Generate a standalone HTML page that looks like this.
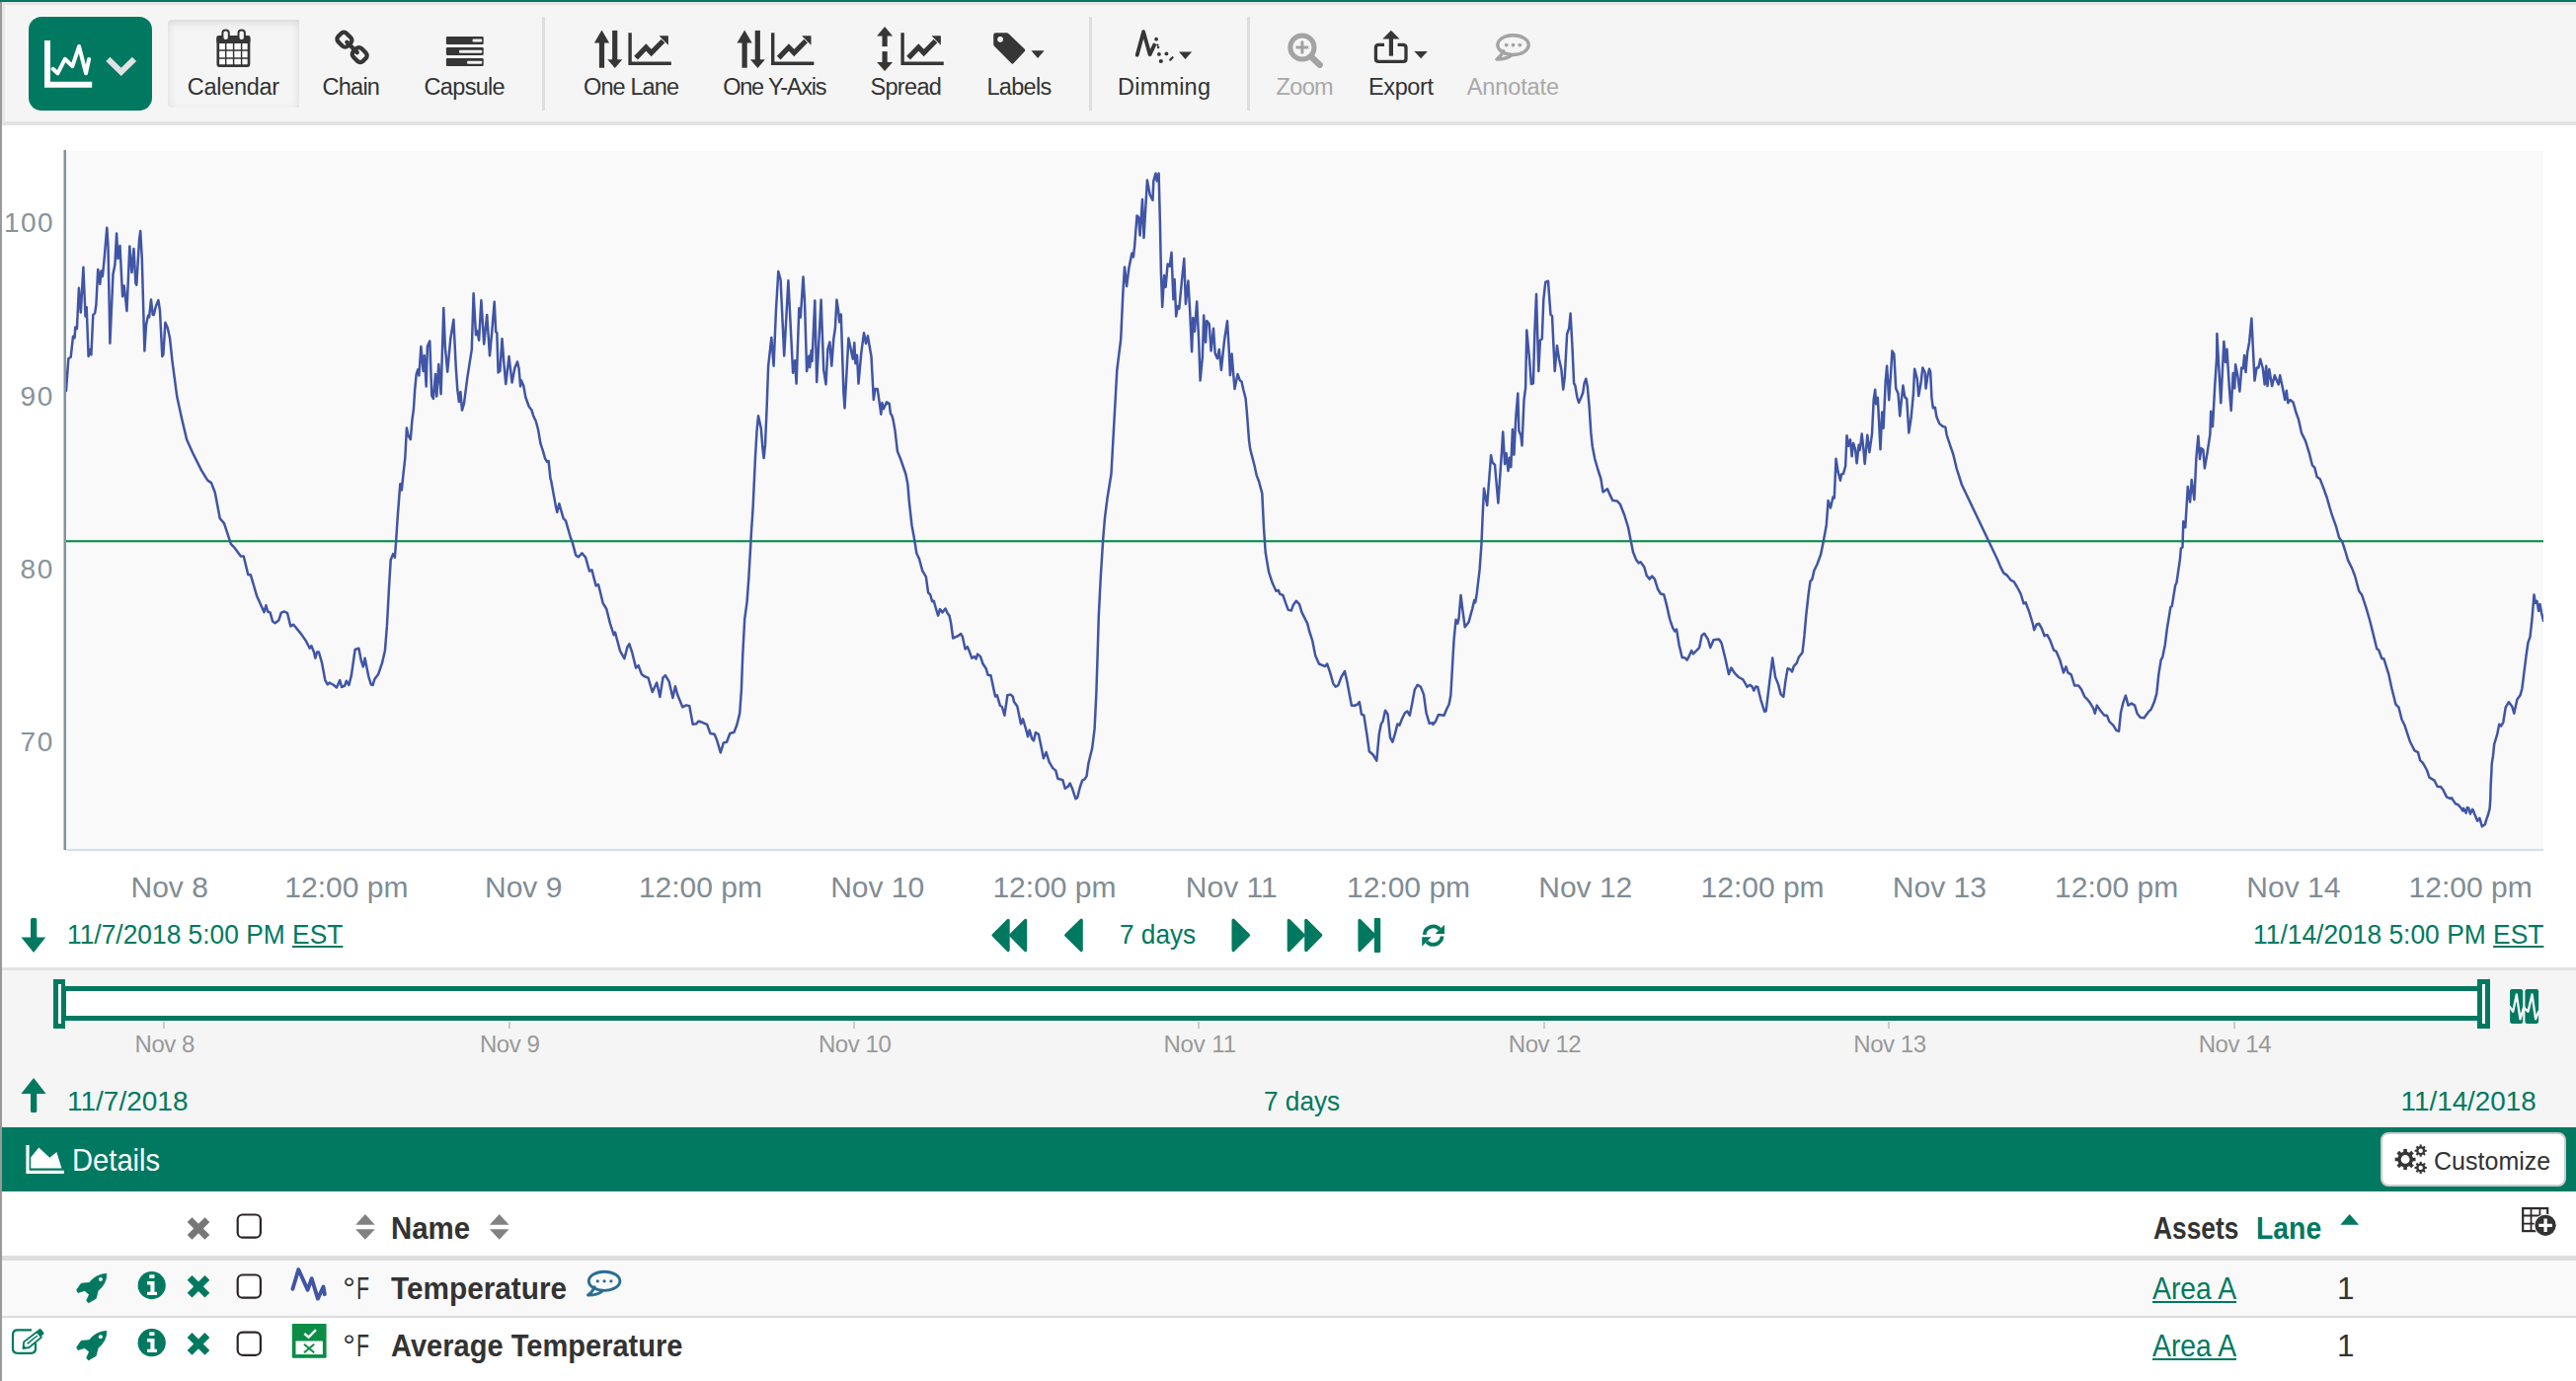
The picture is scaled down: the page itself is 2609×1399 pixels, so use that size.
<!DOCTYPE html>
<html><head><meta charset="utf-8"><title>Seeq Trend</title>
<style>
html,body{margin:0;padding:0}
body{width:2609px;height:1399px;position:relative;overflow:hidden;background:#fff;font-family:"Liberation Sans",sans-serif}
.b{position:absolute;display:block}
.t{position:absolute;white-space:nowrap;line-height:1;display:block}
u{text-decoration-thickness:2px;text-underline-offset:2px}
</style></head><body>
<div class="b" style="left:0px;top:0px;width:2609px;height:2px;background:#007960"></div>
<div class="b" style="left:0px;top:2px;width:2px;height:1397px;background:#999"></div>
<div class="b" style="left:2px;top:2px;width:2607px;height:125px;background:#f5f5f5;box-sizing:border-box;border-top:3px solid #e6e4e4;border-left:3px solid #e8e8e8;border-bottom:4px solid #e2e2e2"></div>
<div class="b" style="left:29px;top:17px;width:125px;height:95px;background:#007960;border-radius:13px"></div>
<div class="b" style="left:170px;top:20px;width:133px;height:89px;background:#f5f5f5;border-radius:4px 0 0 4px;box-shadow:inset 0 3px 8px rgba(0,0,0,0.12)"></div>
<div class="b" style="left:549.3px;top:17px;width:2.6px;height:95px;background:#dfdfdf"></div>
<div class="b" style="left:1103.2px;top:17px;width:2.6px;height:95px;background:#dfdfdf"></div>
<div class="b" style="left:1263.1px;top:17px;width:2.6px;height:95px;background:#dfdfdf"></div>
<span class="t" style="left:189.80px;top:77.21px;font-size:23.5px;color:#333;letter-spacing:-0.293px;">Calendar</span>
<span class="t" style="left:326.60px;top:77.21px;font-size:23.5px;color:#333;letter-spacing:-0.775px;">Chain</span>
<span class="t" style="left:429.60px;top:77.21px;font-size:23.5px;color:#333;letter-spacing:-0.692px;">Capsule</span>
<span class="t" style="left:591.00px;top:77.21px;font-size:23.5px;color:#333;letter-spacing:-0.893px;">One Lane</span>
<span class="t" style="left:732.20px;top:77.21px;font-size:23.5px;color:#333;letter-spacing:-1.206px;">One Y-Axis</span>
<span class="t" style="left:881.50px;top:77.21px;font-size:23.5px;color:#333;letter-spacing:-0.690px;">Spread</span>
<span class="t" style="left:999.40px;top:77.21px;font-size:23.5px;color:#333;letter-spacing:-0.670px;">Labels</span>
<span class="t" style="left:1132.10px;top:77.21px;font-size:23.5px;color:#333;letter-spacing:0.192px;">Dimming</span>
<span class="t" style="left:1292.60px;top:77.21px;font-size:23.5px;color:#a9a9a9;letter-spacing:-0.667px;">Zoom</span>
<span class="t" style="left:1386.10px;top:77.21px;font-size:23.5px;color:#333;letter-spacing:-0.420px;">Export</span>
<span class="t" style="left:1485.70px;top:77.21px;font-size:23.5px;color:#a9a9a9;letter-spacing:-0.100px;">Annotate</span>
<div class="b" style="left:67px;top:153px;width:2509px;height:708px;background:#f9f9f9"></div>
<svg class="b" style="left:0px;top:0px;" width="2609" height="1399" viewBox="0 0 2609 1399"><rect x="64.5" y="152" width="2.5" height="709" fill="#82929b"/>
<rect x="67" y="860.2" width="2509" height="1.6" fill="#ccd6eb"/>
<rect x="67" y="547.2" width="2509" height="2.1" fill="#068c45"/>
<clipPath id="pc"><rect x="67" y="153" width="2509" height="708"/></clipPath>
<path d="M67.0 395.9 L69.3 363.3 L71.7 361.8 L74.0 340.7 L75.6 342.3 L76.3 331.4 L77.9 333.0 L79.9 291.7 L81.8 316.6 L84.4 270.7 L86.5 320.5 L87.7 311.2 L89.6 361.0 L91.1 354.0 L92.4 359.4 L94.3 318.9 L96.1 317.4 L97.4 308.8 L99.2 273.0 L101.3 287.8 L102.4 274.6 L103.9 280.0 L105.5 263.7 L108.3 230.7 L109.5 249.6 L111.4 347.7 L114.5 277.7 L116.4 268.3 L118.1 236.4 L119.5 262.1 L121.5 248.9 L124.1 300.3 L125.7 289.4 L128.5 315.0 L131.3 249.6 L133.5 276.1 L135.5 252.0 L137.4 287.0 L138.3 288.6 L141.0 243.4 L142.2 234.1 L143.8 262.1 L146.4 355.5 L148.0 329.1 L150.0 319.7 L151.1 321.3 L153.0 303.4 L154.7 318.9 L155.8 318.9 L157.8 310.4 L160.4 304.1 L162.0 315.0 L164.3 361.0 L165.4 359.4 L167.4 326.7 L169.8 332.2 L172.1 343.1 L174.4 365.0 L179.3 402.1 L184.2 424.5 L189.2 445.6 L195.4 459.3 L204.1 476.6 L210.3 486.6 L214.0 489.1 L217.8 499.0 L222.7 525.1 L227.0 530.1 L233.9 551.2 L237.6 554.9 L243.9 563.6 L246.8 563.6 L251.3 582.2 L253.8 582.2 L260.0 603.4 L267.5 620.2 L269.4 613.3 L271.2 619.5 L273.7 620.7 L276.1 629.4 L278.6 631.2 L282.4 628.2 L284.8 620.7 L288.1 619.5 L291.1 621.2 L294.3 634.4 L297.3 632.7 L304.7 641.9 L309.9 649.3 L313.7 656.8 L315.4 654.3 L317.9 660.5 L319.4 666.7 L321.1 660.5 L322.9 660.5 L326.1 671.7 L329.3 689.1 L331.8 693.5 L333.5 691.6 L337.3 693.5 L341.0 696.5 L344.2 689.1 L346.0 696.0 L349.2 694.5 L350.9 689.8 L353.4 694.0 L355.9 684.1 L359.6 658.0 L363.4 656.8 L365.8 669.2 L367.8 675.4 L369.6 666.7 L373.3 685.3 L375.8 693.5 L377.5 694.0 L379.5 687.8 L383.2 682.9 L387.0 671.7 L389.9 659.3 L391.9 634.4 L393.9 597.1 L395.7 567.3 L398.1 561.1 L399.9 564.8 L401.1 548.7 L402.9 521.4 L405.3 490.3 L406.8 496.5 L408.6 479.1 L410.3 464.2 L411.9 433.5 L413.5 441.3 L415.8 445.2 L417.4 425.7 L418.9 414.8 L420.2 394.6 L421.7 379.0 L423.3 374.3 L424.4 380.5 L426.4 351.0 L428.6 375.9 L429.8 360.3 L431.7 391.4 L432.9 351.0 L435.3 345.5 L437.3 400.8 L438.9 403.9 L441.0 379.0 L442.3 401.6 L444.3 368.9 L446.6 399.2 L449.3 312.0 L450.8 351.0 L453.2 376.7 L456.3 343.2 L459.4 323.7 L461.7 371.2 L463.3 394.6 L464.9 407.0 L466.4 396.9 L468.0 415.6 L470.0 408.6 L473.4 382.1 L477.8 354.1 L479.6 297.2 L482.0 339.3 L483.5 335.4 L485.1 344.7 L487.4 304.3 L490.2 348.6 L493.2 319.0 L496.0 360.3 L498.3 335.4 L500.7 305.8 L502.2 336.2 L503.3 337.0 L504.6 377.4 L506.4 375.9 L508.5 343.2 L510.5 369.6 L512.3 389.1 L515.5 361.1 L518.6 387.6 L521.4 372.8 L524.0 366.5 L525.6 373.5 L527.1 391.4 L527.9 385.2 L530.3 390.7 L532.3 402.3 L535.7 411.7 L538.5 415.6 L540.4 421.8 L542.7 426.5 L545.0 435.0 L547.4 449.1 L549.7 456.1 L552.1 464.6 L554.1 467.7 L555.6 467.0 L557.5 485.0 L558.1 486.6 L563.1 513.9 L564.3 518.9 L566.3 510.2 L570.6 525.1 L573.0 527.6 L578.0 545.0 L579.5 548.7 L583.2 562.4 L585.7 564.3 L589.4 560.4 L593.2 564.8 L596.9 578.5 L599.4 577.3 L603.6 593.4 L606.1 592.2 L610.6 610.8 L614.3 617.0 L618.0 631.9 L621.7 643.1 L623.0 640.6 L628.0 659.3 L632.4 667.2 L635.4 655.5 L637.4 652.3 L640.4 661.7 L644.1 676.6 L646.6 674.2 L649.8 682.9 L652.8 685.3 L656.5 686.6 L660.7 701.0 L665.2 691.6 L668.4 706.0 L671.4 686.6 L673.9 684.1 L677.6 690.3 L681.4 707.0 L683.9 695.3 L686.3 704.0 L691.3 716.4 L695.0 714.4 L698.3 715.2 L701.7 733.8 L705.0 733.3 L707.5 730.6 L711.2 731.8 L716.1 733.8 L719.4 743.0 L723.6 743.7 L726.1 749.9 L729.8 762.4 L732.8 752.4 L736.0 751.7 L739.3 743.0 L743.5 741.7 L746.5 733.8 L749.2 722.6 L750.9 699.0 L752.2 664.2 L754.2 627.0 L756.6 609.6 L758.4 584.7 L760.1 554.9 L760.9 540.0 L762.6 514.7 L764.9 465.0 L766.5 436.8 L768.0 421.3 L770.8 433.7 L772.4 454.0 L773.6 464.1 L775.0 450.9 L776.6 413.5 L778.1 371.4 L781.3 341.9 L783.6 370.7 L785.9 315.4 L788.3 274.9 L790.6 283.5 L794.2 360.5 L798.4 284.3 L803.1 377.7 L805.1 365.2 L806.6 388.6 L809.3 312.3 L810.8 321.6 L813.5 280.4 L815.0 305.3 L817.1 376.1 L819.4 360.5 L820.2 372.2 L821.7 355.1 L822.5 366.0 L825.3 304.5 L827.2 387.0 L831.6 303.7 L834.2 374.6 L836.5 389.4 L838.4 353.5 L840.4 346.5 L842.3 370.7 L844.3 343.4 L845.9 332.5 L847.4 303.7 L849.0 313.8 L850.2 326.3 L851.8 318.5 L854.4 397.9 L855.5 413.5 L859.4 342.6 L863.8 363.7 L865.3 347.3 L866.4 368.3 L868.0 359.8 L869.5 388.6 L872.3 357.4 L875.0 337.2 L877.0 348.1 L878.9 340.3 L880.9 352.0 L882.5 361.3 L884.8 404.9 L886.4 394.0 L888.7 394.0 L890.3 404.9 L892.3 419.7 L893.4 408.0 L894.9 414.3 L898.0 407.3 L900.7 408.8 L901.9 418.9 L903.5 421.3 L904.7 425.9 L906.6 436.8 L908.9 457.1 L912.1 465.0 L917.3 480.0 L919.3 489.9 L921.0 509.8 L923.5 532.2 L926.0 545.8 L928.4 560.7 L930.9 565.7 L934.2 578.1 L937.9 584.3 L940.1 600.5 L942.1 602.2 L944.1 609.2 L945.8 608.7 L947.6 615.4 L950.1 623.6 L952.0 617.1 L954.5 620.4 L957.5 616.6 L959.5 621.1 L961.5 623.6 L963.2 631.6 L965.2 646.5 L968.2 645.2 L970.7 644.0 L973.2 642.0 L974.9 645.2 L977.6 657.6 L979.9 655.2 L981.9 660.1 L984.3 666.8 L986.8 665.1 L988.6 667.6 L990.1 662.6 L993.0 665.1 L995.5 672.5 L998.8 677.5 L1000.5 683.7 L1003.5 684.2 L1005.5 693.7 L1008.0 705.6 L1009.9 704.3 L1012.9 714.8 L1014.9 716.0 L1017.4 724.7 L1020.4 704.3 L1023.6 703.6 L1025.8 705.6 L1027.1 711.1 L1030.3 715.5 L1034.0 733.4 L1036.0 728.4 L1039.0 738.4 L1041.0 746.3 L1042.7 739.6 L1045.2 748.3 L1047.0 750.3 L1048.9 742.1 L1051.9 743.9 L1053.9 753.3 L1056.9 768.2 L1059.6 762.0 L1062.6 771.9 L1066.3 778.1 L1069.3 780.6 L1071.3 788.8 L1076.3 790.1 L1078.8 798.8 L1081.7 796.8 L1083.7 793.5 L1086.2 799.3 L1089.4 809.2 L1091.2 808.0 L1093.7 798.0 L1096.1 790.6 L1098.6 789.3 L1100.6 786.1 L1102.4 773.2 L1106.1 758.3 L1108.6 738.4 L1110.3 703.6 L1111.6 663.9 L1112.8 624.1 L1114.8 584.3 L1117.3 544.6 L1119.0 524.7 L1121.5 504.8 L1125.5 480.0 L1131.3 375.0 L1135.2 343.7 L1137.5 293.9 L1139.0 270.5 L1141.1 290.0 L1143.3 272.1 L1146.4 256.5 L1147.9 260.4 L1149.2 248.8 L1151.5 218.4 L1153.1 219.9 L1154.6 238.6 L1157.0 202.0 L1158.5 241.0 L1161.9 182.6 L1164.7 197.4 L1167.5 202.8 L1168.3 183.4 L1170.5 175.6 L1171.7 183.4 L1173.6 175.6 L1174.9 225.4 L1175.9 275.2 L1177.2 311.0 L1179.1 279.1 L1180.6 290.8 L1182.6 267.4 L1184.7 269.8 L1186.5 255.8 L1188.4 303.2 L1189.6 283.0 L1191.2 320.4 L1192.8 310.3 L1194.3 312.6 L1197.1 283.0 L1199.3 262.0 L1200.9 307.9 L1203.4 284.6 L1205.2 315.7 L1207.1 356.2 L1208.3 321.9 L1209.9 335.9 L1212.2 305.6 L1214.1 343.7 L1215.6 385.4 L1217.9 361.5 L1219.2 319.6 L1221.1 346.8 L1222.3 325.0 L1224.7 328.2 L1226.6 355.4 L1229.0 332.8 L1230.7 358.0 L1233.0 363.2 L1234.8 353.9 L1236.9 374.9 L1240.0 345.2 L1243.0 325.3 L1244.7 353.3 L1245.9 380.1 L1247.6 358.6 L1248.8 374.3 L1250.5 394.1 L1253.5 379.0 L1255.8 385.4 L1257.5 386.5 L1259.3 394.7 L1261.6 403.5 L1262.8 416.9 L1263.9 431.4 L1265.1 446.6 L1266.3 455.3 L1268.6 464.1 L1270.4 471.1 L1272.7 481.6 L1275.0 487.5 L1278.3 499.9 L1280.0 534.7 L1281.7 559.5 L1285.0 579.4 L1288.7 590.6 L1292.4 598.8 L1294.9 598.0 L1296.1 601.7 L1299.4 603.0 L1302.4 611.7 L1304.8 617.9 L1307.8 618.6 L1309.8 612.9 L1312.8 608.7 L1316.0 612.2 L1318.5 620.4 L1324.2 631.6 L1326.0 639.0 L1329.2 648.9 L1332.2 663.9 L1335.9 672.5 L1339.1 673.8 L1342.1 675.0 L1344.1 672.5 L1347.1 681.2 L1350.3 692.4 L1352.8 695.7 L1355.3 694.2 L1358.3 686.2 L1362.0 680.0 L1364.5 691.2 L1367.0 704.8 L1368.9 714.8 L1371.9 714.8 L1374.9 713.5 L1376.9 711.1 L1378.9 723.5 L1381.4 724.7 L1384.3 743.4 L1386.8 761.2 L1390.6 764.5 L1394.3 770.7 L1396.8 743.4 L1398.8 733.4 L1400.5 730.9 L1403.0 719.8 L1405.5 723.5 L1408.0 747.1 L1410.4 751.6 L1412.9 743.4 L1415.4 733.4 L1417.4 734.7 L1420.4 727.2 L1422.9 722.2 L1425.3 720.5 L1427.8 724.7 L1430.3 712.3 L1432.8 698.6 L1435.8 693.7 L1439.0 696.1 L1442.0 703.6 L1444.5 722.2 L1447.7 732.9 L1450.7 732.2 L1451.4 733.9 L1453.9 730.9 L1456.9 724.0 L1462.6 724.7 L1465.1 718.5 L1467.6 713.5 L1469.3 704.8 L1470.8 678.8 L1472.5 648.9 L1474.5 627.8 L1476.3 631.6 L1477.5 626.6 L1479.5 603.0 L1481.2 616.6 L1483.7 635.3 L1487.5 630.3 L1491.2 616.6 L1493.2 608.0 L1494.2 610.4 L1495.7 601.7 L1498.6 576.9 L1500.4 552.0 L1501.9 517.3 L1503.0 494.7 L1506.2 512.0 L1510.1 461.2 L1511.6 468.5 L1514.0 470.9 L1517.4 509.6 L1521.0 456.8 L1522.2 437.4 L1524.1 470.1 L1525.6 459.2 L1527.5 477.1 L1528.8 463.8 L1530.3 473.2 L1531.9 435.0 L1533.4 460.7 L1535.3 422.6 L1537.3 398.5 L1538.4 436.6 L1540.4 441.3 L1541.5 451.4 L1543.5 405.5 L1545.1 393.0 L1546.3 334.6 L1549.0 363.4 L1550.9 389.1 L1552.9 388.3 L1554.4 335.4 L1556.0 298.0 L1558.3 375.9 L1559.9 344.7 L1561.8 343.2 L1563.3 303.5 L1565.3 285.6 L1568.0 284.8 L1570.5 319.0 L1572.0 319.8 L1574.7 375.9 L1577.0 350.2 L1579.0 363.4 L1581.4 374.3 L1583.2 394.6 L1584.8 382.1 L1587.1 338.5 L1589.2 332.3 L1590.6 317.5 L1592.6 354.1 L1594.1 388.3 L1595.4 390.7 L1597.3 402.3 L1599.1 407.8 L1601.2 403.1 L1603.2 397.7 L1604.7 387.6 L1606.3 383.7 L1607.8 391.4 L1609.7 413.2 L1611.3 438.2 L1612.8 452.2 L1615.2 464.6 L1618.3 475.5 L1621.4 485.0 L1623.5 498.4 L1628.0 495.2 L1630.4 500.9 L1633.4 507.1 L1637.9 507.6 L1640.9 510.8 L1645.3 522.0 L1649.1 534.4 L1652.0 549.3 L1654.0 559.3 L1657.0 566.7 L1659.5 570.4 L1661.5 569.2 L1665.2 574.2 L1667.7 582.9 L1670.7 586.6 L1673.2 583.6 L1675.9 586.6 L1678.9 596.5 L1681.9 601.5 L1685.1 602.2 L1687.6 611.4 L1691.3 627.6 L1694.3 636.3 L1696.3 639.5 L1698.0 637.5 L1700.7 653.7 L1703.7 666.1 L1706.7 666.6 L1708.7 668.6 L1711.2 663.6 L1713.2 659.1 L1714.9 662.4 L1717.4 659.9 L1721.1 656.1 L1723.6 643.7 L1726.1 641.7 L1729.8 647.5 L1732.3 656.1 L1735.5 648.2 L1741.0 647.5 L1743.5 651.2 L1747.2 666.1 L1750.9 683.0 L1753.4 676.5 L1757.1 682.2 L1760.9 686.0 L1765.3 688.4 L1769.6 695.9 L1772.0 693.9 L1774.5 695.4 L1776.3 699.6 L1778.3 695.4 L1780.2 695.9 L1783.2 708.3 L1787.0 720.7 L1788.7 720.2 L1791.9 693.4 L1795.2 666.6 L1798.1 686.0 L1801.1 693.4 L1803.6 703.4 L1806.3 705.8 L1808.6 688.4 L1810.6 677.3 L1813.0 678.0 L1815.0 680.5 L1816.8 674.8 L1819.8 671.6 L1821.7 666.1 L1825.5 661.1 L1827.5 643.7 L1829.2 623.9 L1831.7 601.5 L1833.4 589.1 L1835.4 586.6 L1837.4 577.9 L1840.4 571.7 L1844.1 561.7 L1846.6 549.3 L1849.8 531.9 L1851.6 507.1 L1854.0 514.5 L1856.5 503.4 L1857.8 504.6 L1859.5 464.8 L1861.6 478.1 L1863.9 486.8 L1865.1 480.4 L1867.0 479.8 L1869.1 472.2 L1870.5 441.3 L1872.1 451.8 L1874.0 445.4 L1875.6 462.3 L1877.1 448.9 L1879.1 455.3 L1880.6 469.3 L1882.6 450.7 L1883.7 455.9 L1885.7 439.6 L1887.2 453.6 L1888.7 469.9 L1891.3 440.8 L1893.4 458.2 L1896.0 439.6 L1897.7 404.6 L1899.2 394.7 L1900.0 409.3 L1901.8 402.9 L1904.5 455.3 L1906.2 417.4 L1907.6 433.8 L1909.7 386.0 L1911.1 370.8 L1913.2 405.2 L1915.2 375.5 L1916.4 355.6 L1918.3 358.6 L1920.2 393.5 L1922.5 398.8 L1924.2 421.5 L1925.9 404.6 L1927.4 390.6 L1929.2 402.3 L1931.2 404.0 L1933.3 438.4 L1935.6 423.3 L1937.9 398.8 L1939.1 373.7 L1941.7 383.6 L1943.2 401.1 L1945.5 388.3 L1947.3 372.6 L1949.6 377.2 L1950.5 393.5 L1952.5 380.1 L1954.0 373.7 L1955.2 377.2 L1956.4 402.3 L1957.8 413.4 L1959.9 412.8 L1961.3 422.1 L1964.2 429.1 L1967.7 432.0 L1970.3 432.6 L1971.7 440.8 L1975.2 451.3 L1978.2 460.0 L1981.7 474.6 L1986.9 491.0 L2023.0 566.7 L2026.7 575.4 L2029.2 580.4 L2032.9 582.9 L2036.6 587.8 L2039.6 589.1 L2042.9 594.5 L2046.6 601.5 L2049.6 611.4 L2051.6 610.2 L2055.3 620.1 L2059.0 632.5 L2060.2 638.3 L2062.7 632.5 L2065.2 631.8 L2067.7 636.3 L2070.7 644.2 L2073.4 643.2 L2076.4 648.7 L2080.1 658.6 L2082.6 659.9 L2086.3 668.6 L2090.0 681.4 L2092.4 675.4 L2094.4 681.4 L2097.7 683.4 L2101.1 694.5 L2105.1 694.5 L2108.1 698.5 L2111.2 705.6 L2114.2 708.6 L2117.2 712.6 L2120.2 717.7 L2121.8 722.7 L2123.8 714.6 L2127.3 719.7 L2131.3 724.7 L2133.9 724.7 L2136.3 730.8 L2140.4 734.8 L2143.4 739.8 L2146.0 740.8 L2148.0 721.7 L2150.4 711.6 L2152.9 704.6 L2155.5 714.6 L2158.9 712.6 L2162.1 714.6 L2164.5 722.7 L2167.6 726.7 L2171.6 727.3 L2175.6 721.7 L2178.6 718.7 L2181.7 711.6 L2184.3 702.6 L2186.3 683.4 L2188.7 668.3 L2190.1 666.3 L2192.8 653.2 L2194.8 637.1 L2198.4 614.9 L2199.8 613.9 L2203.2 592.8 L2204.4 590.7 L2207.9 566.6 L2208.9 555.5 L2210.5 554.5 L2211.3 528.3 L2213.3 534.3 L2215.8 493.1 L2218.1 508.6 L2219.7 486.1 L2222.4 506.3 L2224.4 463.5 L2226.4 441.7 L2228.0 465.0 L2229.5 454.1 L2231.4 455.7 L2232.9 474.4 L2235.3 460.4 L2238.4 440.1 L2239.2 416.8 L2241.0 432.3 L2243.1 393.4 L2245.1 362.3 L2245.4 338.1 L2249.3 408.2 L2252.4 345.9 L2254.0 367.0 L2255.5 353.7 L2257.9 393.4 L2259.7 416.0 L2261.7 377.9 L2263.3 393.4 L2264.1 369.3 L2266.4 381.0 L2268.4 396.5 L2270.3 372.4 L2271.9 373.2 L2273.1 359.9 L2274.5 377.1 L2276.2 356.8 L2278.1 346.7 L2280.4 322.6 L2283.5 385.6 L2285.6 372.4 L2287.4 372.4 L2289.3 363.8 L2291.8 373.2 L2293.7 389.5 L2295.2 370.8 L2296.5 391.1 L2298.3 374.0 L2301.1 391.1 L2303.8 380.2 L2307.7 389.5 L2309.2 380.2 L2312.3 395.0 L2314.2 405.1 L2315.8 395.8 L2317.3 408.2 L2319.4 405.1 L2322.5 407.4 L2325.6 418.3 L2327.9 424.6 L2331.0 438.6 L2334.9 446.4 L2338.8 458.8 L2341.9 471.3 L2344.3 473.6 L2346.6 483.0 L2349.7 485.3 L2352.8 493.1 L2356.7 504.0 L2359.8 515.0 L2362.0 522.2 L2366.0 533.3 L2369.0 544.4 L2372.1 548.4 L2375.1 557.5 L2378.1 567.6 L2382.1 575.6 L2385.2 583.7 L2389.2 598.8 L2392.2 602.8 L2396.2 614.9 L2400.3 629.0 L2404.3 645.1 L2407.3 657.2 L2409.3 658.8 L2412.4 667.3 L2414.4 667.3 L2419.4 683.4 L2422.4 697.5 L2426.5 713.6 L2429.5 716.7 L2432.5 728.7 L2435.5 734.8 L2440.8 751.0 L2445.5 760.4 L2449.0 762.1 L2451.1 770.2 L2454.1 773.2 L2457.9 780.0 L2460.5 787.7 L2465.6 790.7 L2468.6 796.7 L2472.0 797.1 L2474.2 799.7 L2478.0 807.4 L2481.9 809.1 L2483.1 808.2 L2484.0 809.9 L2487.0 814.2 L2489.5 815.1 L2492.5 818.5 L2494.2 821.5 L2495.1 818.9 L2497.7 823.6 L2498.9 818.1 L2500.2 818.5 L2501.9 824.5 L2504.1 819.8 L2504.9 821.0 L2506.2 824.5 L2509.2 831.7 L2511.3 828.7 L2513.9 837.3 L2516.9 835.1 L2518.2 830.4 L2519.9 825.7 L2521.6 819.3 L2522.3 809.1 L2522.6 796.3 L2523.3 783.5 L2523.7 774.1 L2525.0 765.5 L2526.2 753.9 L2529.2 743.9 L2531.2 733.8 L2533.2 735.4 L2535.3 731.8 L2537.7 716.7 L2540.9 711.2 L2544.3 715.7 L2546.3 722.7 L2549.4 708.6 L2552.4 704.6 L2554.4 697.5 L2556.4 681.4 L2558.4 665.3 L2560.4 651.2 L2562.5 645.1 L2564.5 627.0 L2566.5 602.4 L2567.9 610.9 L2569.5 608.9 L2571.1 618.9 L2572.5 611.9 L2574.1 621.0 L2576.0 629.0" clip-path="url(#pc)" fill="none" stroke="#4055a5" stroke-width="2.5" stroke-linejoin="round" stroke-linecap="round"/></svg>
<span class="t" style="left:3.90px;top:211.70px;font-size:28px;color:#86939b;letter-spacing:1.425px;">100</span>
<span class="t" style="left:20.50px;top:388.20px;font-size:28px;color:#86939b;letter-spacing:1.750px;">90</span>
<span class="t" style="left:20.50px;top:563.20px;font-size:28px;color:#86939b;letter-spacing:1.750px;">80</span>
<span class="t" style="left:20.50px;top:738.30px;font-size:28px;color:#86939b;letter-spacing:1.750px;">70</span>
<span class="t" style="left:132.47px;top:884.31px;font-size:30px;color:#808c95;">Nov 8</span>
<span class="t" style="left:288.37px;top:884.31px;font-size:30px;color:#808c95;">12:00 pm</span>
<span class="t" style="left:491.01px;top:884.31px;font-size:30px;color:#808c95;">Nov 9</span>
<span class="t" style="left:646.91px;top:884.31px;font-size:30px;color:#808c95;">12:00 pm</span>
<span class="t" style="left:841.18px;top:884.31px;font-size:30px;color:#808c95;">Nov 10</span>
<span class="t" style="left:1005.45px;top:884.31px;font-size:30px;color:#808c95;">12:00 pm</span>
<span class="t" style="left:1200.85px;top:884.31px;font-size:30px;color:#808c95;">Nov 11</span>
<span class="t" style="left:1363.99px;top:884.31px;font-size:30px;color:#808c95;">12:00 pm</span>
<span class="t" style="left:1558.26px;top:884.31px;font-size:30px;color:#808c95;">Nov 12</span>
<span class="t" style="left:1722.53px;top:884.31px;font-size:30px;color:#808c95;">12:00 pm</span>
<span class="t" style="left:1916.80px;top:884.31px;font-size:30px;color:#808c95;">Nov 13</span>
<span class="t" style="left:2081.07px;top:884.31px;font-size:30px;color:#808c95;">12:00 pm</span>
<span class="t" style="left:2275.34px;top:884.31px;font-size:30px;color:#808c95;">Nov 14</span>
<span class="t" style="left:2439.61px;top:884.31px;font-size:30px;color:#808c95;">12:00 pm</span>
<span class="t" style="left:68.00px;top:933.37px;font-size:27.8px;color:#007960;transform:scaleX(0.9482);transform-origin:0 0;">11/7/2018 5:00 PM <u>EST</u></span>
<span class="t" style="left:2282.40px;top:933.37px;font-size:27.8px;color:#007960;transform:scaleX(0.9493);transform-origin:0 0;">11/14/2018 5:00 PM <u>EST</u></span>
<span class="t" style="left:1134.00px;top:933.37px;font-size:27.8px;color:#007960;transform:scaleX(0.9419);transform-origin:0 0;">7 days</span>
<div class="b" style="left:2px;top:980px;width:2607px;height:162px;background:#f5f5f5;border-top:3px solid #e3e3e3;box-sizing:border-box"></div>
<div class="b" style="left:62px;top:999.4px;width:2452px;height:35px;background:#fff;border:5px solid #007960;box-sizing:border-box"></div>
<div class="b" style="left:53.8px;top:992px;width:12.7px;height:49.8px;background:#007960"></div>
<div class="b" style="left:58.8px;top:997px;width:2.9px;height:40.2px;background:#fff"></div>
<div class="b" style="left:2509.0px;top:992px;width:12.7px;height:49.8px;background:#007960"></div>
<div class="b" style="left:2514.0px;top:997px;width:2.9px;height:40.2px;background:#fff"></div>
<div class="b" style="left:165.1px;top:1035px;width:2px;height:6.5px;background:#ccc"></div>
<span class="t" style="left:136.50px;top:1045.58px;font-size:24px;color:#999;letter-spacing:-0.438px;">Nov 8</span>
<div class="b" style="left:514.53px;top:1035px;width:2px;height:6.5px;background:#ccc"></div>
<span class="t" style="left:485.93px;top:1045.58px;font-size:24px;color:#999;letter-spacing:-0.438px;">Nov 9</span>
<div class="b" style="left:863.96px;top:1035px;width:2px;height:6.5px;background:#ccc"></div>
<span class="t" style="left:828.96px;top:1045.58px;font-size:24px;color:#999;letter-spacing:-0.440px;">Nov 10</span>
<div class="b" style="left:1213.3899999999999px;top:1035px;width:2px;height:6.5px;background:#ccc"></div>
<span class="t" style="left:1178.39px;top:1045.58px;font-size:24px;color:#999;letter-spacing:-0.090px;">Nov 11</span>
<div class="b" style="left:1562.82px;top:1035px;width:2px;height:6.5px;background:#ccc"></div>
<span class="t" style="left:1527.82px;top:1045.58px;font-size:24px;color:#999;letter-spacing:-0.440px;">Nov 12</span>
<div class="b" style="left:1912.25px;top:1035px;width:2px;height:6.5px;background:#ccc"></div>
<span class="t" style="left:1877.25px;top:1045.58px;font-size:24px;color:#999;letter-spacing:-0.440px;">Nov 13</span>
<div class="b" style="left:2261.68px;top:1035px;width:2px;height:6.5px;background:#ccc"></div>
<span class="t" style="left:2226.68px;top:1045.58px;font-size:24px;color:#999;letter-spacing:-0.440px;">Nov 14</span>
<span class="t" style="left:68.20px;top:1102.37px;font-size:27.8px;color:#007960;transform:scaleX(1.0074);transform-origin:0 0;">11/7/2018</span>
<span class="t" style="left:1279.50px;top:1102.37px;font-size:27.8px;color:#007960;transform:scaleX(0.9419);transform-origin:0 0;">7 days</span>
<span class="t" style="left:2431.60px;top:1102.37px;font-size:27.8px;color:#007960;">11/14/2018</span>
<div class="b" style="left:2px;top:1142px;width:2607px;height:65px;background:#007960"></div>
<span class="t" style="left:73.00px;top:1160.14px;font-size:31.5px;color:#fff;transform:scaleX(0.9257);transform-origin:0 0;">Details</span>
<div class="b" style="left:2411px;top:1146.8px;width:188px;height:55.3px;background:#fff;border:2.6px solid #cbcbcb;border-radius:8px;box-sizing:border-box"></div>
<span class="t" style="left:2464.90px;top:1164.14px;font-size:25px;color:#333;letter-spacing:0.037px;">Customize</span>
<div class="b" style="left:2px;top:1207px;width:2607px;height:65.5px;background:#fff"></div>
<div class="b" style="left:2px;top:1272.3px;width:2607px;height:5px;background:#dedede"></div>
<div class="b" style="left:2px;top:1277.3px;width:2607px;height:56px;background:#f9f9f9"></div>
<div class="b" style="left:2px;top:1333.3px;width:2607px;height:1.8px;background:#dcdcdc"></div>
<span class="t" style="left:396.40px;top:1228.84px;font-size:31.5px;color:#333;font-weight:700;transform:scaleX(0.9341);transform-origin:0 0;">Name</span>
<span class="t" style="left:2180.70px;top:1228.84px;font-size:31.5px;color:#333;font-weight:700;transform:scaleX(0.8358);transform-origin:0 0;">Assets</span>
<span class="t" style="left:2284.80px;top:1228.84px;font-size:31.5px;color:#007960;font-weight:700;transform:scaleX(0.9007);transform-origin:0 0;">Lane</span>
<span class="t" style="left:347.30px;top:1289.74px;font-size:31.5px;color:#333;">°</span>
<span class="t" style="left:360.60px;top:1289.74px;font-size:31.5px;color:#333;transform:scaleX(0.6753);transform-origin:0 0;">F</span>
<span class="t" style="left:396.40px;top:1289.74px;font-size:31.5px;color:#333;font-weight:700;transform:scaleX(0.9448);transform-origin:0 0;">Temperature</span>
<span class="t" style="left:2180.00px;top:1289.74px;font-size:31.5px;color:#007960;transform:scaleX(0.8995);transform-origin:0 0;text-decoration:underline;text-decoration-thickness:2px;text-underline-offset:2px;">Area A</span>
<span class="t" style="left:2367.00px;top:1289.74px;font-size:31.5px;color:#333;">1</span>
<span class="t" style="left:347.30px;top:1347.84px;font-size:31.5px;color:#333;">°</span>
<span class="t" style="left:360.60px;top:1347.84px;font-size:31.5px;color:#333;transform:scaleX(0.6753);transform-origin:0 0;">F</span>
<span class="t" style="left:396.40px;top:1347.84px;font-size:31.5px;color:#333;font-weight:700;transform:scaleX(0.9223);transform-origin:0 0;">Average Temperature</span>
<span class="t" style="left:2180.00px;top:1347.84px;font-size:31.5px;color:#007960;transform:scaleX(0.8995);transform-origin:0 0;text-decoration:underline;text-decoration-thickness:2px;text-underline-offset:2px;">Area A</span>
<span class="t" style="left:2367.00px;top:1347.84px;font-size:31.5px;color:#333;">1</span>
<svg class="b" style="left:0px;top:0px;" width="2609" height="1399" viewBox="0 0 2609 1399"><path d="M48 41 V85.7 H93.2" fill="none" stroke="#fff" stroke-width="6"/>
<path d="M53.6 69.8 L58.4 74.3 L65.8 59.8 L73.3 67.1 L80.1 47 L87 74.3 L90.1 60" fill="none" stroke="#fff" stroke-width="4" stroke-linejoin="round" stroke-linecap="round"/>
<path d="M109.4 59.8 L122.7 72.8 L136 59.8" fill="none" stroke="#e2e2e2" stroke-width="6"/>
<rect x="220.8" y="37.5" width="31.2" height="29.2" rx="2" fill="#fff" stroke="#363636" stroke-width="2.7"/>
<rect x="219.3" y="36" width="34.2" height="8" rx="2" fill="#363636"/>
<rect x="227.95" y="43" width="1.5" height="24" fill="#363636"/>
<rect x="235.85" y="43" width="1.5" height="24" fill="#363636"/>
<rect x="243.85" y="43" width="1.5" height="24" fill="#363636"/>
<rect x="220" y="50.25" width="33" height="1.5" fill="#363636"/>
<rect x="220" y="58.25" width="33" height="1.5" fill="#363636"/>
<rect x="225.4" y="30.6" width="6.4" height="10.4" rx="3" fill="#f5f5f5" stroke="#363636" stroke-width="2"/>
<rect x="241.5" y="30.6" width="6.4" height="10.4" rx="3" fill="#f5f5f5" stroke="#363636" stroke-width="2"/>
<rect x="342.0" y="34.2" width="13.8" height="12.0" rx="4" fill="none" stroke="#363636" stroke-width="4.3" transform="rotate(45 348.9 40.2)"/>
<rect x="357.3" y="49.6" width="13.8" height="12.0" rx="4" fill="none" stroke="#363636" stroke-width="4.3" transform="rotate(45 364.2 55.6)"/>
<path d="M351.4 42.8 L361.7 53.1" stroke="#363636" stroke-width="4.4" stroke-linecap="round"/>
<rect x="451.9" y="37.0" width="37.8" height="7.9" rx="1.2" fill="#363636"/>
<rect x="478.6" y="39.6" width="9.6" height="3" rx="0.8" fill="#f2f2f2"/>
<rect x="451.9" y="48.1" width="37.8" height="7.9" rx="1.2" fill="#363636"/>
<rect x="465.0" y="50.7" width="23.2" height="3" rx="0.8" fill="#f2f2f2"/>
<rect x="451.9" y="59.1" width="37.8" height="7.9" rx="1.2" fill="#363636"/>
<rect x="473.1" y="61.7" width="15.1" height="3" rx="0.8" fill="#f2f2f2"/>
<polygon points="601.9,43.4 609.5,30.6 617.1,43.4" fill="#363636"/><rect x="606.9" y="42" width="5.2" height="26.7" fill="#363636"/><rect x="620.1" y="30.9" width="5.2" height="30.5" fill="#363636"/><polygon points="615.3,60.2 630.3,60.2 622.8,68.9" fill="#363636"/>
<path d="M638.0999999999999 33.2 V64.2 H679.8" fill="none" stroke="#363636" stroke-width="3.4"/><path d="M644.0999999999999 58.6 L654.3 47.9 L659.6999999999999 53.6 L671.5 41.5" fill="none" stroke="#363636" stroke-width="5.2" stroke-linejoin="miter"/><polygon points="667.5,36.2 676.9,36.2 676.9,45.8" fill="#363636"/>
<polygon points="746.5,43.4 754.1,30.6 761.7,43.4" fill="#363636"/><rect x="751.5" y="42" width="5.2" height="26.7" fill="#363636"/><rect x="764.7" y="30.9" width="5.2" height="30.5" fill="#363636"/><polygon points="759.9,60.2 774.9,60.2 767.4,68.9" fill="#363636"/>
<path d="M782.6999999999999 33.2 V64.2 H824.4" fill="none" stroke="#363636" stroke-width="3.4"/><path d="M788.6999999999999 58.6 L798.9 47.9 L804.3 53.6 L816.1 41.5" fill="none" stroke="#363636" stroke-width="5.2" stroke-linejoin="miter"/><polygon points="812.1,36.2 821.5,36.2 821.5,45.8" fill="#363636"/>
<polygon points="888.1,36.4 896.1,27.0 904.1,36.4" fill="#363636"/>
<rect x="893.5" y="35.5" width="5.2" height="11.6" fill="#363636"/>
<rect x="893.5" y="52.1" width="5.2" height="12" fill="#363636"/>
<polygon points="888.1,62.9 896.1,72.0 904.1,62.9" fill="#363636"/>
<path d="M914.0999999999999 33.2 V64.2 H955.8" fill="none" stroke="#363636" stroke-width="3.4"/><path d="M920.0999999999999 58.6 L930.3 47.9 L935.6999999999999 53.6 L947.5 41.5" fill="none" stroke="#363636" stroke-width="5.2" stroke-linejoin="miter"/><polygon points="943.5,36.2 952.9,36.2 952.9,45.8" fill="#363636"/>
<path d="M1008.4 33.2 H1019.6 Q1020.6 33.2 1021.4 34 L1037.6 49.6 Q1038.9 50.9 1037.6 52.2 L1026.6 64 Q1025.4 65.3 1024.1 64 L1007.2 47 Q1006.2 46 1006.2 44.8 V35.4 Q1006.2 33.2 1008.4 33.2 Z" fill="#363636"/>
<circle cx="1013.1" cy="39.8" r="2.9" fill="#f5f5f5"/>
<polygon points="1044.4,51.3 1057.7,51.3 1051.1,58.9" fill="#363636"/>
<path d="M1151.7 55.7 L1158.1 32.2 L1164.6 55.2 L1169.1 45.6" fill="none" stroke="#363636" stroke-width="3.8" stroke-linejoin="round" stroke-linecap="round"/>
<circle cx="1171.1" cy="39.7" r="1.9" fill="#363636"/>
<circle cx="1172.3" cy="45.6" r="1.2" fill="#363636"/>
<circle cx="1173.1" cy="48.0" r="1.2" fill="#363636"/>
<circle cx="1173.9" cy="54.9" r="1.9" fill="#363636"/>
<circle cx="1175.8" cy="62.0" r="2.1" fill="#363636"/>
<circle cx="1181.4" cy="54.4" r="1.9" fill="#363636"/>
<path d="M1185.2 60.6 L1187.6 58.2" stroke="#363636" stroke-width="2.2" stroke-linecap="round"/>
<polygon points="1194.0,52.5 1207.1,52.5 1200.5,59.9" fill="#363636"/>
<circle cx="1318.9" cy="48.0" r="12.1" fill="none" stroke="#a3a3a3" stroke-width="5"/>
<path d="M1312.5 48 H1325.3 M1318.9 41.6 V54.4" stroke="#a3a3a3" stroke-width="3"/>
<path d="M1328.6 58.1 L1336.6 65.7" stroke="#a3a3a3" stroke-width="6.4" stroke-linecap="round"/>
<path d="M1402 45.4 H1396.4 Q1393.4 45.4 1393.4 48.4 V59.4 Q1393.4 62.4 1396.4 62.4 H1421 Q1424 62.4 1424 59.4 V48.4 Q1424 45.4 1421 45.4 H1415.6" fill="none" stroke="#363636" stroke-width="3.3"/>
<rect x="1406.8" y="38.5" width="4.2" height="18.2" fill="#363636"/>
<polygon points="1400.3,39.6 1408.9,30.8 1417.6,39.6" fill="#363636"/>
<polygon points="1432.4,51.9 1445.9,51.9 1439.1,59.2" fill="#363636"/>
<ellipse cx="1532.5" cy="45.6" rx="15.7" ry="9.9" fill="none" stroke="#a3a3a3" stroke-width="3.4"/><path d="M1522.7 51.7 Q1520.2 57.2 1516.0 60.1 Q1524.7 60.1 1530.2 56.3" fill="none" stroke="#a3a3a3" stroke-width="3.4" stroke-linejoin="round" stroke-linecap="round"/><circle cx="1525.7" cy="45.6" r="1.9" fill="#a3a3a3"/><circle cx="1532.5" cy="45.6" r="1.9" fill="#a3a3a3"/><circle cx="1539.3" cy="45.6" r="1.9" fill="#a3a3a3"/>
<path d="M1021.10 932.29 L1006.15 947.40 L1021.10 962.51 Z" fill="#007960" stroke="#007960" stroke-width="3.2" stroke-linejoin="round"/>
<path d="M1038.60 932.29 L1023.65 947.40 L1038.60 962.51 Z" fill="#007960" stroke="#007960" stroke-width="3.2" stroke-linejoin="round"/>
<path d="M1095.20 932.21 L1079.69 947.40 L1095.20 962.59 Z" fill="#007960" stroke="#007960" stroke-width="3.2" stroke-linejoin="round"/>
<path d="M1249.10 932.22 L1264.52 947.40 L1249.10 962.58 Z" fill="#007960" stroke="#007960" stroke-width="3.2" stroke-linejoin="round"/>
<path d="M1305.30 932.29 L1320.25 947.40 L1305.30 962.51 Z" fill="#007960" stroke="#007960" stroke-width="3.2" stroke-linejoin="round"/>
<path d="M1322.80 932.29 L1337.75 947.40 L1322.80 962.51 Z" fill="#007960" stroke="#007960" stroke-width="3.2" stroke-linejoin="round"/>
<path d="M1377.00 932.31 L1391.86 947.40 L1377.00 962.49 Z" fill="#007960" stroke="#007960" stroke-width="3.2" stroke-linejoin="round"/>
<rect x="1391.8" y="930" width="6.4" height="35" rx="1" fill="#007960"/>
<path d="M1442.7 946.9 A8.9 8.9 0 0 1 1458.2 941.5" fill="none" stroke="#007960" stroke-width="3.8"/>
<path d="M1460.5 948.5 A8.9 8.9 0 0 1 1445.0 953.9" fill="none" stroke="#007960" stroke-width="3.8"/>
<polygon points="1463.0,936.7 1463.0,946.1 1453.6,946.1" fill="#007960"/>
<polygon points="1440.2,958.7 1440.2,949.3 1449.6,949.3" fill="#007960"/>
<rect x="31.0" y="930.1" width="6.3" height="22" rx="1.6" fill="#007960"/>
<polygon points="21.5,949.6 46.3,949.6 34.1,965.0" fill="#007960"/>
<rect x="31.0" y="1105" width="6.3" height="22" rx="1.6" fill="#007960"/>
<polygon points="21.4,1107.9 46.6,1107.9 34.1,1092.1" fill="#007960"/>
<rect x="2542.1" y="1002" width="13.1" height="35" rx="2.2" fill="#007960"/>
<rect x="2557.4" y="1002" width="13.7" height="35" rx="2.2" fill="#007960"/>
<path d="M2541.6 1019.4 L2545.2 1024.8 L2548.8 1007.4 L2552.5 1032.4 L2556.1 1020.6 L2560.5 1024.8 L2564.5 1007.4 L2568.1 1032.4 L2571.5 1023.8" fill="none" stroke="#f8f8f8" stroke-width="2.3" stroke-linejoin="round"/>
<path d="M28 1160 V1187.3 H64.8" fill="none" stroke="#fff" stroke-width="3.2"/>
<polygon points="31.2,1172.6 39.3,1162.4 50.4,1172.8 57.4,1167.0 62.4,1183.6 31.2,1183.6" fill="#fff"/>
<polygon points="2446.54,1172.68 2446.54,1176.32 2443.78,1176.34 2442.84,1178.63 2444.77,1180.60 2442.20,1183.17 2440.23,1181.24 2437.94,1182.18 2437.92,1184.94 2434.28,1184.94 2434.26,1182.18 2431.97,1181.24 2430.00,1183.17 2427.43,1180.60 2429.36,1178.63 2428.42,1176.34 2425.66,1176.32 2425.66,1172.68 2428.42,1172.66 2429.36,1170.37 2427.43,1168.40 2430.00,1165.83 2431.97,1167.76 2434.26,1166.82 2434.28,1164.06 2437.92,1164.06 2437.94,1166.82 2440.23,1167.76 2442.20,1165.83 2444.77,1168.40 2442.84,1170.37 2443.78,1172.66" fill="#363636"/><circle cx="2436.1" cy="1174.5" r="4.4" fill="#fff"/>
<polygon points="2457.81,1164.63 2457.81,1166.77 2456.17,1166.77 2455.62,1168.10 2456.77,1169.27 2455.27,1170.77 2454.10,1169.62 2452.77,1170.17 2452.77,1171.81 2450.63,1171.81 2450.63,1170.17 2449.30,1169.62 2448.13,1170.77 2446.63,1169.27 2447.78,1168.10 2447.23,1166.77 2445.59,1166.77 2445.59,1164.63 2447.23,1164.63 2447.78,1163.30 2446.63,1162.13 2448.13,1160.63 2449.30,1161.78 2450.63,1161.23 2450.63,1159.59 2452.77,1159.59 2452.77,1161.23 2454.10,1161.78 2455.27,1160.63 2456.77,1162.13 2455.62,1163.30 2456.17,1164.63" fill="#363636"/><circle cx="2451.7" cy="1165.7" r="2.2" fill="#fff"/>
<polygon points="2457.81,1181.83 2457.81,1183.97 2456.17,1183.97 2455.62,1185.30 2456.77,1186.47 2455.27,1187.97 2454.10,1186.82 2452.77,1187.37 2452.77,1189.01 2450.63,1189.01 2450.63,1187.37 2449.30,1186.82 2448.13,1187.97 2446.63,1186.47 2447.78,1185.30 2447.23,1183.97 2445.59,1183.97 2445.59,1181.83 2447.23,1181.83 2447.78,1180.50 2446.63,1179.33 2448.13,1177.83 2449.30,1178.98 2450.63,1178.43 2450.63,1176.79 2452.77,1176.79 2452.77,1178.43 2454.10,1178.98 2455.27,1177.83 2456.77,1179.33 2455.62,1180.50 2456.17,1181.83" fill="#363636"/><circle cx="2451.7" cy="1182.9" r="2.2" fill="#fff"/>
<path d="M192.1 1235.6 L209.9 1253.4 M209.9 1235.6 L192.1 1253.4" stroke="#777" stroke-width="6.8" stroke-linecap="butt"/>
<rect x="240.7" y="1230.5" width="23.2" height="23.2" rx="5" fill="#fff" stroke="#2e2626" stroke-width="2.2"/>
<polygon points="360.1,1240.8 379.7,1240.8 369.9,1230.0" fill="#828282"/>
<polygon points="360.1,1245.3 379.7,1245.3 369.9,1255.8" fill="#828282"/>
<polygon points="495.9,1240.8 515.5,1240.8 505.7,1230.0" fill="#828282"/>
<polygon points="495.9,1245.3 515.5,1245.3 505.7,1255.8" fill="#828282"/>
<polygon points="2370.3,1240.8 2389.1,1240.8 2379.7,1230.0" fill="#007960"/>
<rect x="2555.2" y="1224.1" width="25" height="23" fill="#fff" stroke="#2f2a2a" stroke-width="2.2"/>
<path d="M2563.5 1224 V1247 M2572.4 1224 V1247 M2555 1231.5 H2580 M2555 1239.7 H2580" stroke="#2f2a2a" stroke-width="1.8"/>
<circle cx="2578.1" cy="1241.3" r="11.6" fill="#fff"/><circle cx="2578.1" cy="1241.3" r="10.6" fill="#333"/>
<path d="M2571.3 1241.3 H2584.9 M2578.1 1234.5 V1248.1" stroke="#fff" stroke-width="3.3"/>
<path d="M107.8 1290.2 Q108.2 1300.0 99.2 1307.6 L97.2 1315.4 L89.6 1319.8 L87.7 1317.4 L90.4 1311.4 L85.8 1307.4 L79.0 1309.5 L77.7 1306.8 L82.2 1300.2 L90.2 1299.6 Q97 1291.0 107.8 1290.2 Z" fill="#007960" stroke="#007960" stroke-width="0.8" stroke-linejoin="round"/><circle cx="101.9" cy="1296.1" r="2" fill="#fff"/>
<circle cx="153.7" cy="1302.1" r="14.1" fill="#007960"/><rect x="151.3" y="1291.3" width="5.2" height="3.6" fill="#fff"/><path d="M149.1 1298.0 H156.5 V1308.7 H159.0 V1312.0 H149.1 V1308.7 H152.4 V1301.4 H149.1 Z" fill="#fff"/>
<path d="M192.1 1294.4 L209.9 1312.2 M209.9 1294.4 L192.1 1312.2" stroke="#007960" stroke-width="6.8" stroke-linecap="butt"/>
<rect x="240.7" y="1291.5" width="23.2" height="23.2" rx="5" fill="#fff" stroke="#2e2626" stroke-width="2.2"/>
<path d="M107.8 1348.3 Q108.2 1358.1 99.2 1365.6999999999998 L97.2 1373.5 L89.6 1377.8999999999999 L87.7 1375.5 L90.4 1369.5 L85.8 1365.5 L79.0 1367.6 L77.7 1364.8999999999999 L82.2 1358.3 L90.2 1357.6999999999998 Q97 1349.1 107.8 1348.3 Z" fill="#007960" stroke="#007960" stroke-width="0.8" stroke-linejoin="round"/><circle cx="101.9" cy="1354.1999999999998" r="2" fill="#fff"/>
<circle cx="153.7" cy="1360.1999999999998" r="14.1" fill="#007960"/><rect x="151.3" y="1349.4" width="5.2" height="3.6" fill="#fff"/><path d="M149.1 1356.1 H156.5 V1366.8 H159.0 V1370.1 H149.1 V1366.8 H152.4 V1359.5 H149.1 Z" fill="#fff"/>
<path d="M192.1 1352.5 L209.9 1370.3 M209.9 1352.5 L192.1 1370.3" stroke="#007960" stroke-width="6.8" stroke-linecap="butt"/>
<rect x="240.7" y="1349.6" width="23.2" height="23.2" rx="5" fill="#fff" stroke="#2e2626" stroke-width="2.2"/>
<path d="M296.4 1305.8 L302.3 1286 L311.6 1306.6 L315.7 1295.2 L321.9 1315.6 L327.5 1303.6 L328.8 1311.2" fill="none" stroke="#4055a5" stroke-width="3.9" stroke-linejoin="round" stroke-linecap="round"/>
<ellipse cx="612.1" cy="1297.8" rx="15.8" ry="9.6" fill="none" stroke="#2a6d92" stroke-width="2.9"/><path d="M602.2 1303.8 Q599.7 1309.3 595.5 1312.0 Q604.2 1312.2 609.7 1308.4" fill="none" stroke="#2a6d92" stroke-width="2.9" stroke-linejoin="round" stroke-linecap="round"/><circle cx="605.3" cy="1297.8" r="1.6" fill="#2a6d92"/><circle cx="612.1" cy="1297.8" r="1.6" fill="#2a6d92"/><circle cx="618.9" cy="1297.8" r="1.6" fill="#2a6d92"/>
<rect x="295.8" y="1341" width="34.8" height="34.8" rx="1" fill="#0a8d45"/>
<path d="M308.3 1351.0 L312.6 1354.6 L320.0 1347.2" fill="none" stroke="#fff" stroke-width="2.4"/>
<rect x="299.5" y="1358.5" width="27.4" height="13.6" fill="#fff"/>
<path d="M308 1361.8 L318.2 1370.2 M318.2 1361.8 L308 1370.2" stroke="#0a8d45" stroke-width="2"/>
<path d="M32 1347.4 H17.8 Q13 1347.4 13 1352.2 V1366 Q13 1370.8 17.8 1370.8 H31.2 Q36 1370.8 36 1366 V1360.6" fill="none" stroke="#007960" stroke-width="2.2"/>
<path d="M23.4 1366.2 L24.2 1359.4 L37.4 1349.2 L42 1354.6 L29.6 1365 Z" fill="none" stroke="#007960" stroke-width="1.8" stroke-linejoin="round"/>
<path d="M37.2 1348.4 L39.6 1346.4 Q40.8 1345.6 41.8 1346.8 L44.2 1349.8 Q45 1351 43.8 1352 L41.8 1353.6 Z" fill="#007960"/>
<path d="M23.4 1366.2 L24 1362.6 L26.6 1365.4 Z" fill="#007960"/><path d="M27.6 1361.4 L37.8 1353" stroke="#007960" stroke-width="1.4"/></svg>
</body></html>
